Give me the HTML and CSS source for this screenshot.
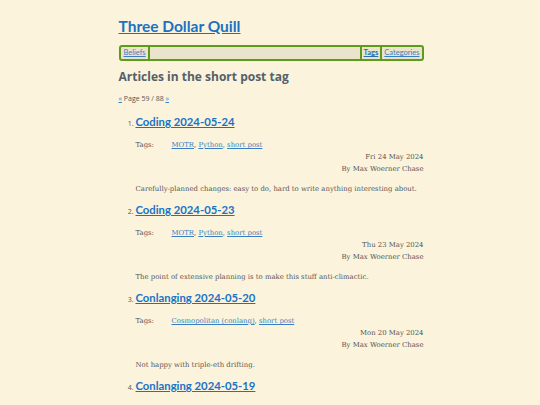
FILE: index.html
```html
<!DOCTYPE html>
<html>
<head>
<meta charset="utf-8">
<link rel="stylesheet" href="styles.css">
</head>
<body>
<div class="page">
  <header class="site-header">
    <h1 class="site-title"><a href="#">Three Dollar Quill</a></h1>
    <nav class="nav">
      <a class="nav-link" href="#">Beliefs</a>
      <span class="nav-fill"></span>
      <a class="nav-link active" href="#">Tags</a>
      <a class="nav-link" href="#">Categories</a>
    </nav>
  </header>
  <main>
    <h2 class="tag-heading">Articles in the short post tag</h2>
    <p class="pager"><a href="#">«</a> Page 59 / 88 <a href="#">»</a></p>
    <ol class="articles" start="1">
      <li class="article">
        <h3 class="article-title"><a href="#">Coding 2024-05-24</a></h3>
        <div class="tags"><span class="tags-label">Tags:</span><span class="tags-list"><a href="#">MOTR</a>, <a href="#">Python</a>, <a href="#">short post</a></span></div>
        <div class="meta"><div>Fri 24 May 2024</div><div>By Max Woerner Chase</div></div>
        <p class="summary">Carefully-planned changes: easy to do, hard to write anything interesting about.</p>
      </li>
      <li class="article">
        <h3 class="article-title"><a href="#">Coding 2024-05-23</a></h3>
        <div class="tags"><span class="tags-label">Tags:</span><span class="tags-list"><a href="#">MOTR</a>, <a href="#">Python</a>, <a href="#">short post</a></span></div>
        <div class="meta"><div>Thu 23 May 2024</div><div>By Max Woerner Chase</div></div>
        <p class="summary">The point of extensive planning is to make this stuff anti-climactic.</p>
      </li>
      <li class="article">
        <h3 class="article-title"><a href="#">Conlanging 2024-05-20</a></h3>
        <div class="tags"><span class="tags-label">Tags:</span><span class="tags-list"><a href="#">Cosmopolitan (conlang)</a>, <a href="#">short post</a></span></div>
        <div class="meta"><div>Mon 20 May 2024</div><div>By Max Woerner Chase</div></div>
        <p class="summary">Not happy with triple-eth drifting.</p>
      </li>
      <li class="article">
        <h3 class="article-title"><a href="#">Conlanging 2024-05-19</a></h3>
      </li>
    </ol>
  </main>
</div>
</body>
</html>
```
FILE: styles.css
```css
html, body {
  margin: 0;
  padding: 0;
  background: #fbf3dc;
}
body {
  font-family: "DejaVu Serif", serif;
  color: #555;
  overflow: hidden;
  height: 405px;
}
.page {
  width: 305px;
  margin: 0 auto;
  padding-top: 15px;
  padding-left: 2px;
}
.site-title {
  margin: 0;
  font-family: Lato, sans-serif;
  font-size: 15.5px;
  font-weight: 700;
  line-height: 22px;
}
.site-title a {
  color: #1a72c4;
}
.nav {
  display: flex;
  align-items: stretch;
  margin-top: 8px;
  border: 2px solid #5e9a1c;
  border-radius: 3px;
  background: #ebe4cd;
  height: 12px;
  font-family: Lato, sans-serif;
  font-size: 7.5px;
  line-height: 12px;
}
.nav-link {
  color: #3a7fc0;
  padding: 0 2px;
}
.nav-link:first-child {
  padding-left: 3px;
  border-right: 2px solid #5e9a1c;
}
.nav-fill {
  flex: 1;
}
.nav-link.active {
  font-weight: 700;
  color: #2a6fb0;
  border-left: 2px solid #5e9a1c;
  border-right: 2px solid #5e9a1c;
}
.tag-heading {
  margin: 8px 0 0;
  font-family: "Open Sans", sans-serif;
  font-size: 12px;
  font-weight: 700;
  color: #55606a;
  line-height: 16px;
}
.pager {
  margin: 9px 0 0;
  font-family: "Open Sans", sans-serif;
  font-size: 7px;
  color: #555;
  line-height: 10px;
}
.pager a {
  color: #3a7fc0;
}
.articles {
  margin: 10px 0 0;
  padding-left: 17px;
  font-family: "Open Sans", sans-serif;
  font-size: 7px;
}
.article {
  margin-bottom: 7px;
}
.article-title {
  margin: 0;
  font-family: Lato, sans-serif;
  font-size: 11.3px;
  font-weight: 700;
  line-height: 16px;
}
.article-title a {
  color: #1a72c4;
}
.tags,
.meta,
.summary {
  font-family: "DejaVu Serif", serif;
  font-size: 6.9px;
  line-height: 12px;
}
.tags {
  display: flex;
  margin-top: 9px;
}
.tags-label {
  width: 36px;
}
.tags-list a {
  color: #3a7fc0;
}
.meta {
  text-align: right;
}
.summary {
  margin: 8px 0 0;
  white-space: nowrap;
}
```
